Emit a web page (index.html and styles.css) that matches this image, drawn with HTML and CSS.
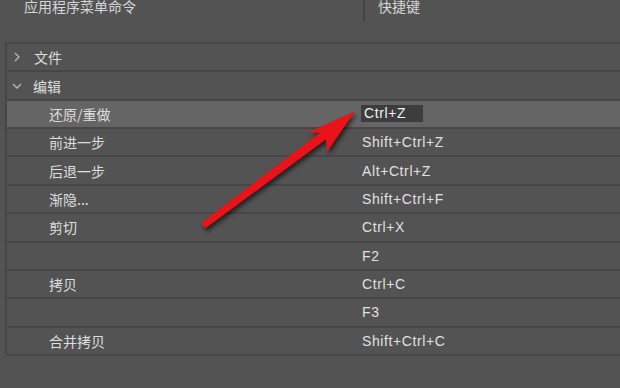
FILE: index.html
```html
<!DOCTYPE html>
<html lang="zh-CN">

<head>
    <meta charset="UTF-8">
    <title>键盘快捷键</title>
    <link rel="stylesheet" href="styles.css">
</head>

<body>

    <!-- Cabeçalho das colunas -->
    <div class="header">
        <div class="hd-cmd"><span>应用程序菜单命令</span></div>
        <div class="hd-key"><span>快捷键</span></div>
    </div>

    <!-- Lista de comandos -->
    <div class="panel">
        <div class="row group">
            <div class="name">
                <svg class="chev" width="8" height="10" viewBox="0 0 8 10"><path d="M2 1 L6 5 L2 9" /></svg>
                文件
            </div>
            <div class="key"></div>
        </div>
        <div class="row group">
            <div class="name">
                <svg class="chev" width="10" height="8" viewBox="0 0 10 8"><path d="M1 2 L5 6 L9 2" /></svg>
                编辑
            </div>
            <div class="key"></div>
        </div>
        <div class="row item active">
            <div class="name">还原/重做</div>
            <div class="key"><span class="edit">Ctrl+Z</span></div>
        </div>
        <div class="row item">
            <div class="name">前进一步</div>
            <div class="key">Shift+Ctrl+Z</div>
        </div>
        <div class="row item">
            <div class="name">后退一步</div>
            <div class="key">Alt+Ctrl+Z</div>
        </div>
        <div class="row item">
            <div class="name">渐隐...</div>
            <div class="key">Shift+Ctrl+F</div>
        </div>
        <div class="row item">
            <div class="name">剪切</div>
            <div class="key">Ctrl+X</div>
        </div>
        <div class="row item">
            <div class="name"></div>
            <div class="key">F2</div>
        </div>
        <div class="row item">
            <div class="name">拷贝</div>
            <div class="key">Ctrl+C</div>
        </div>
        <div class="row item">
            <div class="name"></div>
            <div class="key">F3</div>
        </div>
        <div class="row item">
            <div class="name">合并拷贝</div>
            <div class="key">Shift+Ctrl+C</div>
        </div>
    </div>

    <!-- Seta vermelha por cima -->
    <svg class="arrow" width="620" height="388" viewBox="0 0 620 388">
        <polygon points="355,111 307,133 320.2,132.5 201,223 205,228.6 325.8,139.6 327,152" />
    </svg>

</body>

</html>
```

FILE: styles.css
```css
body {
    margin: 0;
    padding: 0;
    background-color: #535353;
    color: #dedede;
    font-family: "Noto Sans CJK SC", "Liberation Sans", sans-serif;
    font-size: 14px;
    overflow: hidden;
}

.header {
    display: flex;
    height: 42px;
}

.hd-cmd {
    width: 339px;
    height: 22px;
    padding-left: 24px;
    border-right: 2px solid #444;
}

.hd-cmd span,
.hd-key span {
    display: block;
    line-height: 14px;
    margin-top: -1px;
    color: #d6d6d6;
}

.hd-key {
    padding-left: 13px;
}

.panel {
    margin-left: 5px;
    border-left: 2px solid #464646;
    border-top: 2px solid #474747;
}

.row {
    display: grid;
    grid-template-columns: 352px 1fr;
    align-items: center;
    box-sizing: border-box;
    height: 28.36px;
    border-bottom: 2px solid #474747;
}

.row.active {
    background-color: #656565;
}

.name {
    display: flex;
    align-items: center;
    white-space: nowrap;
}

.group .name {
    padding-left: 5px;
}

.item .name {
    padding-left: 42px;
}

.chev {
    fill: none;
    stroke: #b8b8b8;
    stroke-width: 1.3;
    margin-right: 11px;
}

.group:first-child .chev {
    margin-left: 1px;
    margin-right: 13px;
}

.key {
    font-family: "Liberation Sans", sans-serif;
    font-size: 14px;
    letter-spacing: 0.6px;
    padding-left: 3px;
    color: #e0e0e0;
}

.edit {
    display: inline-block;
    width: 59px;
    margin-left: -1px;
    padding: 0 0 0 3px;
    line-height: 17px;
    background-color: #3d3d3d;
    color: #f2f2f2;
}

.arrow {
    position: absolute;
    left: 0;
    top: 0;
    pointer-events: none;
    fill: #e8141a;
    filter: drop-shadow(2px 3px 2px rgba(0, 0, 0, 0.6));
}
```
